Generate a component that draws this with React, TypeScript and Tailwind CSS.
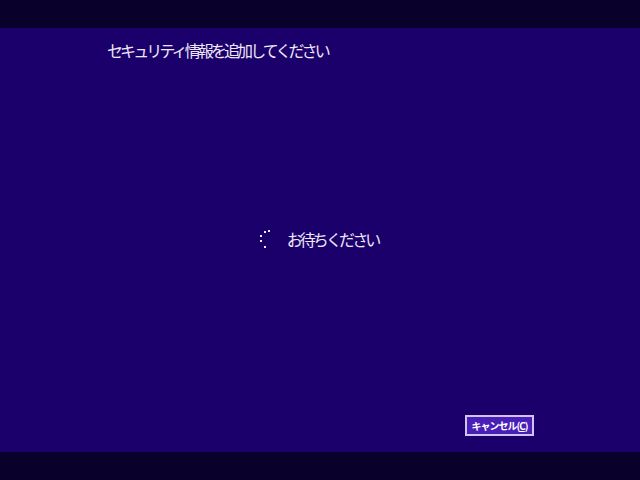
import React from 'react';

const jp = { fontFamily: '"Noto Sans CJK JP", "Noto Sans", sans-serif' };

// Dots of the Windows "working" spinner, frozen mid-turn
const dots = [
  [13, 2],
  [9, 3],
  [5, 7],
  [5, 12],
  [9, 18],
];

function Spinner() {
  return (
    <svg width="20" height="22" viewBox="0 0 20 22">
      {dots.map(([x, y], i) => (
        <rect key={i} x={x} y={y} width="2" height="2" fill="#f0eef8" />
      ))}
    </svg>
  );
}

export default function App() {
  return (
    <div className="flex flex-col w-[640px] h-[480px] bg-[#1b006c]" style={jp}>
      <div className="h-[28px] bg-[#0a002c]" />

      <div className="flex flex-1 flex-col">
        {/* Title */}
        <div className="pl-[107px] pt-[12px] h-[34px]">
          <h1 className="text-[16px] leading-[20px] tracking-[-2.9px] text-[#ece8f6]">
            セキュリティ情報を追加してください
          </h1>
        </div>

        {/* Waiting */}
        <div className="flex flex-1 items-center justify-center">
          <div className="flex items-center gap-[12px] mr-[7px]">
            <Spinner />
            <span className="text-[16px] leading-[20px] tracking-[-2.9px] text-[#ece8f6]">
              お待ちください
            </span>
          </div>
        </div>

        {/* Actions */}
        <div className="flex justify-end pr-[106px] pb-[16px]">
          <button className="flex items-center justify-center w-[69px] h-[21px] border-2 border-[#cfc4f2] bg-[#4a1fb8] text-white text-[10px] font-bold leading-none tracking-[-1px]">
            キャンセル(<span className="underline">C</span>)
          </button>
        </div>
      </div>

      <div className="h-[28px] bg-[#0a002c]" />
    </div>
  );
}
